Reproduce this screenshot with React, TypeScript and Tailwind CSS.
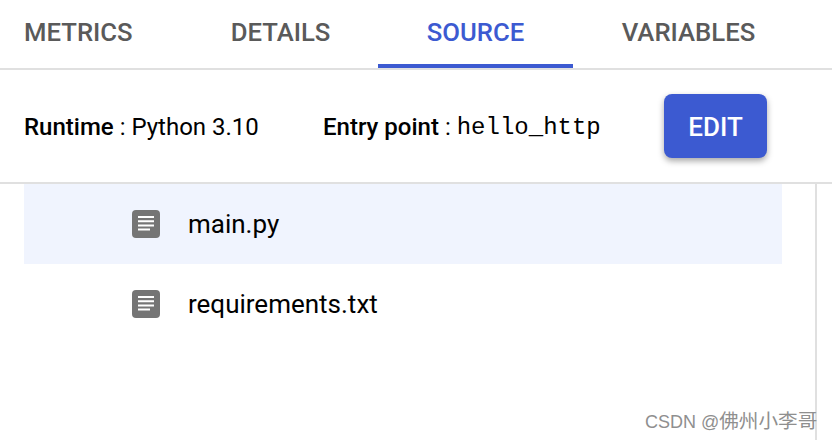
const tabs = [
  { label: "METRICS", width: "w-[183px] pl-6 justify-start", active: false },
  { label: "DETAILS", width: "w-[195px] justify-center", active: false },
  { label: "SOURCE", width: "w-[195px] justify-center", active: true },
  { label: "VARIABLES", width: "w-[231px] justify-center", active: false },
];

function FileIcon() {
  return (
    <svg width="28" height="28" viewBox="0 0 28 28" className="shrink-0">
      <rect width="28" height="28" rx="4" fill="#757575" />
      <path d="M6 7h16M6 11.3h16M6 15.6h16M6 19.6h12" stroke="#fff" strokeWidth="2" />
    </svg>
  );
}

function FileRow({ name, selected }: { name: string; selected?: boolean }) {
  return (
    <div className={`flex h-20 items-center pl-[108px] ${selected ? "bg-[#f0f4fe]" : ""}`}>
      <FileIcon />
      <span className="ml-7 text-[26px] text-black">{name}</span>
    </div>
  );
}

export default function App() {
  return (
    <div className="relative h-[440px] w-[832px] overflow-hidden bg-white font-['Roboto',sans-serif]">
      <div className="flex h-[70px] border-b-2 border-[#e0e0e0]">
        {tabs.map((tab) => (
          <div
            key={tab.label}
            className={`flex h-[68px] items-center border-b-4 text-[25.7px] font-medium ${tab.width} ${
              tab.active ? "border-[#3c5ad1] text-[#3c5ad1]" : "border-transparent text-[#5a5a5a]"
            }`}
          >
            {tab.label}
          </div>
        ))}
      </div>

      <div className="flex h-[114px] items-center border-b-2 border-[#e0e0e0] pl-6 text-[24px] text-black">
        <div className="w-[299px] pt-0.5">
          <span className="font-medium">Runtime</span> : Python 3.10
        </div>
        <div className="flex w-[341px] items-center pt-0.5">
          <span className="font-medium">Entry point</span>
          <span className="ml-1.5">:</span>
          <span className="ml-1.5 pt-0.5 font-['Liberation_Mono',monospace]">hello_http</span>
        </div>
        <button className="h-16 w-[103px] rounded-lg bg-[#3c5ad1] pt-0.5 text-[26px] font-medium text-white shadow-[0_3px_6px_rgba(0,0,0,0.35)]">
          EDIT
        </button>
      </div>

      <div className="h-[256px] w-[817px] border-r-2 border-[#e0e0e0] pl-6 pr-[33px]">
        <FileRow name="main.py" selected />
        <FileRow name="requirements.txt" />
      </div>

      <div className="absolute left-[645px] top-[409px] whitespace-nowrap font-['Liberation_Sans','Noto_Sans_CJK_SC',sans-serif] text-[18px] leading-6 text-[#8f8f8f]">
        CSDN @<span className="text-[19.6px]">佛州小李哥</span>
      </div>
    </div>
  );
}
